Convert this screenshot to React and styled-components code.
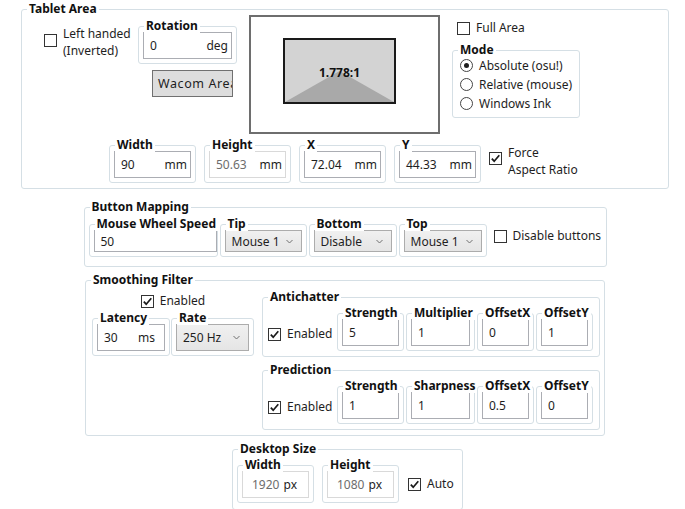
import React from 'react';
import styled, { createGlobalStyle } from 'styled-components';

const Global = createGlobalStyle`
  html, body { margin: 0; padding: 0; background: #fff; overflow: hidden; }
  body {
    font-family: "Noto Sans", "Open Sans", sans-serif;
    font-size: 12px;
    color: #1e1e1e;
  }
`;

const Page = styled.div`
  width: 685px;
  height: 509px;
  box-sizing: border-box;
  padding: 9px 0 0 5px;
  display: flex;
  flex-direction: column;
  align-items: center;
`;

const Group = styled.div`
  position: relative;
  box-sizing: border-box;
  flex: none;
  width: ${(p) => p.$w}px;
  margin-top: ${(p) => p.$mt || 0}px;
  margin-left: ${(p) => p.$ml || 0}px;
  padding: ${(p) => p.$pad || '5px 4px 4px 4px'};
  border: 1px solid #d5dfe5;
  border-radius: 3px;
`;

const Title = styled.span`
  position: absolute;
  top: -9px;
  left: 5px;
  padding: 0 2px;
  background: #fff;
  font-weight: 700;
  font-size: 12px;
  line-height: 15px;
  color: #111;
  white-space: nowrap;
`;

const Field = styled.div`
  box-sizing: border-box;
  width: 100%;
  height: ${(p) => p.$h || 27}px;
  display: flex;
  align-items: center;
  justify-content: space-between;
  padding: ${(p) => p.$pad || '0 3px 0 6px'};
  background: #fff;
  border: 1px solid ${(p) => (p.$disabled ? '#d9d9d9' : '#abadb3')};
  white-space: nowrap;
`;

const Value = styled.span`
  color: ${(p) => (p.$disabled ? '#6d6d6d' : '#1e1e1e')};
`;

const Unit = styled.span`
  color: #1e1e1e;
`;

const Combo = styled.div`
  box-sizing: border-box;
  width: 100%;
  height: ${(p) => p.$h || 22}px;
  display: flex;
  align-items: center;
  justify-content: space-between;
  padding: 0 8px 0 6px;
  border: 1px solid #acacac;
  background: linear-gradient(#f0f0f0, #e5e5e5);
  white-space: nowrap;
`;

const CheckLabel = styled.label`
  display: inline-flex;
  align-items: ${(p) => (p.$top ? 'flex-start' : 'center')};
  gap: 6px;
  line-height: ${(p) => p.$lh || 16}px;
  white-space: nowrap;
  flex: none;
  align-self: ${(p) => p.$self || 'auto'};
  margin: ${(p) => p.$m || '0'};
`;

const Box = styled.span`
  flex: none;
  width: 13px;
  height: 13px;
  box-sizing: border-box;
  border: 1px solid #333;
  background: #fff;
  display: flex;
  align-items: center;
  justify-content: center;
  margin-top: ${(p) => p.$mt || 0}px;
`;

const Lines = styled.span`
  display: flex;
  flex-direction: column;
`;

const RadioRow = styled.div`
  display: flex;
  align-items: center;
  gap: 6px;
  height: 19px;
  white-space: nowrap;
`;

const RadioCircle = styled.span`
  flex: none;
  width: 13px;
  height: 13px;
  box-sizing: border-box;
  border: 1px solid #444;
  border-radius: 50%;
  background: #fff;
  display: flex;
  align-items: center;
  justify-content: center;
  &::after {
    content: '';
    width: 5px;
    height: 5px;
    border-radius: 50%;
    background: ${(p) => (p.$on ? '#1e1e1e' : 'transparent')};
  }
`;

const Row = styled.div`
  display: flex;
  align-items: ${(p) => p.$align || 'flex-start'};
  gap: ${(p) => p.$gap || 0}px;
  margin-top: ${(p) => p.$mt || 0}px;
  margin-left: ${(p) => p.$ml || 0}px;
`;

const TopRow = styled.div`
  display: flex;
  align-items: flex-start;
`;

const LeftPane = styled.div`
  width: 193px;
  margin-top: 11px;
  display: flex;
  flex-direction: column;
`;

const LeftTop = styled.div`
  display: flex;
  justify-content: space-between;
  align-items: flex-start;
`;

const WacomButton = styled.button`
  align-self: flex-end;
  margin: 6px 4px 0 0;
  width: 81px;
  height: 27px;
  box-sizing: border-box;
  border: 1px solid #707070;
  background: #dddddd;
  padding: 0 0 0 5px;
  font: inherit;
  font-size: 12.5px;
  letter-spacing: 0.6px;
  color: #1e1e1e;
  text-align: left;
  overflow: hidden;
  white-space: nowrap;
`;

const Preview = styled.div`
  position: relative;
  flex: none;
  margin-left: 12px;
  width: 191px;
  height: 119px;
  box-sizing: border-box;
  border: 2px solid #6e6e6e;
  background: #fff;
`;

const AreaRect = styled.div`
  position: absolute;
  box-sizing: border-box;
  border: 2px solid #1a1a1a;
  background: #d3d3d3;
  display: flex;
  align-items: center;
  justify-content: center;
`;

const AreaShade = styled.svg`
  position: absolute;
  inset: 0;
  width: 100%;
  height: 100%;
`;

const Ratio = styled.span`
  position: relative;
  font-weight: 700;
  color: #111;
  margin-top: 2px;
`;

const RightPane = styled.div`
  margin-left: 12px;
  display: flex;
  flex-direction: column;
  align-items: flex-start;
`;

const Col = styled.div`
  display: flex;
  flex-direction: column;
  width: ${(p) => (p.$w ? `${p.$w}px` : 'auto')};
  margin-top: ${(p) => p.$mt || 0}px;
  margin-left: ${(p) => p.$ml || 0}px;
`;

const Subs = styled.div`
  display: flex;
  gap: 2px;
  margin-left: auto;
`;

const Check = ({ children, on, ...rest }) => (
  <CheckLabel {...rest}>
    <Box $mt={rest.$boxTop}>
      {on && (
        <svg width="11" height="11" viewBox="0 0 11 11">
          <path d="M1.8 5.6 L4.2 8.2 L9.3 2.3" fill="none" stroke="#1a1a1a" strokeWidth="1.7" />
        </svg>
      )}
    </Box>
    {children}
  </CheckLabel>
);

const Chevron = () => (
  <svg width="7" height="5" viewBox="0 0 7 5">
    <path d="M0.5 1 L3.5 4 L6.5 1" fill="none" stroke="#707070" strokeWidth="1" />
  </svg>
);

const InputGroup = ({ title, w, value, unit, disabled, pad, h, groupPad }) => (
  <Group $w={w} $pad={groupPad}>
    <Title>{title}</Title>
    <Field $disabled={disabled} $pad={pad} $h={h}>
      <Value $disabled={disabled}>{value}</Value>
      {unit && <Unit>{unit}</Unit>}
    </Field>
  </Group>
);

const ComboGroup = ({ title, w, value, h }) => (
  <Group $w={w}>
    <Title>{title}</Title>
    <Combo $h={h}>
      <span>{value}</span>
      <Chevron />
    </Combo>
  </Group>
);

const filterRows = [
  {
    title: 'Antichatter',
    fields: [
      ['Strength', 67, '5'],
      ['Multiplier', 69, '1'],
      ['OffsetX', 57, '0'],
      ['OffsetY', 57, '1'],
    ],
  },
  {
    title: 'Prediction',
    fields: [
      ['Strength', 67, '1'],
      ['Sharpness', 69, '1'],
      ['OffsetX', 57, '0.5'],
      ['OffsetY', 57, '0'],
    ],
  },
];

const area = { left: 32, top: 21, width: 113, height: 66 };

export default function App() {
  return (
    <>
      <Global />
      <Page>
        <Group $w={648} $pad="5px 0 5px 22px">
          <Title>Tablet Area</Title>
          <TopRow>
            <LeftPane>
              <LeftTop>
                <Check $top $lh={16.5} $boxTop={8}>
                  <Lines>
                    <span>Left handed</span>
                    <span>(Inverted)</span>
                  </Lines>
                </Check>
                <InputGroup title="Rotation" w={99} value="0" unit="deg" />
              </LeftTop>
              <WacomButton>Wacom Area</WacomButton>
            </LeftPane>
            <Preview>
              <AreaRect style={area}>
                <AreaShade viewBox="0 0 100 100" preserveAspectRatio="none">
                  <polygon points="0,100 50,50 100,100" fill="#a9a9a9" />
                </AreaShade>
                <Ratio>1.778:1</Ratio>
              </AreaRect>
            </Preview>
            <RightPane>
              <Check $m="5px 0 0 5px">Full Area</Check>
              <Group $w={128} $mt={14} $pad="5px 4px 4px 7px">
                <Title>Mode</Title>
                <RadioRow>
                  <RadioCircle $on />
                  Absolute (osu!)
                </RadioRow>
                <RadioRow>
                  <RadioCircle />
                  Relative (mouse)
                </RadioRow>
                <RadioRow>
                  <RadioCircle />
                  Windows Ink
                </RadioRow>
              </Group>
            </RightPane>
          </TopRow>
          <Row $gap={8} $mt={11} $ml={65}>
            <InputGroup title="Width" w={87} value="90" unit="mm" />
            <InputGroup title="Height" w={87} value="50.63" unit="mm" disabled />
            <InputGroup title="X" w={87} value="72.04" unit="mm" />
            <InputGroup title="Y" w={87} value="44.33" unit="mm" />
            <Check on $top $lh={16.5} $boxTop={7}>
              <Lines>
                <span>Force</span>
                <span>Aspect Ratio</span>
              </Lines>
            </Check>
          </Row>
        </Group>

        <Group $w={523} $mt={18} $pad="16px 4px 9px 4px">
          <Title>Button Mapping</Title>
          <Row $gap={2}>
            <InputGroup
              title="Mouse Wheel Speed"
              w={129}
              value="50"
              h={22}
              groupPad="5px 0 4px 4px"
            />
            <ComboGroup title="Tip" w={87} value="Mouse 1" />
            <ComboGroup title="Bottom" w={88} value="Disable" />
            <ComboGroup title="Top" w={88} value="Mouse 1" />
            <Check $m="4px 0 0 5px">Disable buttons</Check>
          </Row>
        </Group>

        <Group $w={520} $mt={13} $pad="13px 5px 5px 6px">
          <Title>Smoothing Filter</Title>
          <Row>
            <Col $w={162}>
              <Check on $lh={14} $self="center">
                Enabled
              </Check>
              <Row $gap={1} $mt={10}>
                <InputGroup title="Latency" w={78} value="30" unit="ms" pad="0 9px 0 6px" />
                <ComboGroup title="Rate" w={83} value="250 Hz" h={27} />
              </Row>
            </Col>
            <Col $ml={8} $mt={3}>
              {filterRows.map((row, i) => (
                <Group key={row.title} $w={338} $mt={i ? 13 : 0} $pad="15px 6px 5px 5px">
                  <Title>{row.title}</Title>
                  <Row $align="center">
                    <Check on $m="4px 0 0 0">
                      Enabled
                    </Check>
                    <Subs>
                      {row.fields.map(([t, w, v]) => (
                        <InputGroup key={t} title={t} w={w} value={v} />
                      ))}
                    </Subs>
                  </Row>
                </Group>
              ))}
            </Col>
          </Row>
        </Group>

        <Group $w={231} $mt={13} $ml={5} $pad="15px 4px 6px 4px">
          <Title>Desktop Size</Title>
          <Row $gap={8} $align="center">
            <InputGroup title="Width" w={77} value="1920" unit="px" disabled pad="0 11px 0 9px" />
            <InputGroup title="Height" w={77} value="1080" unit="px" disabled pad="0 11px 0 9px" />
            <Check on $m="0 0 0 1px">Auto</Check>
          </Row>
        </Group>
      </Page>
    </>
  );
}
